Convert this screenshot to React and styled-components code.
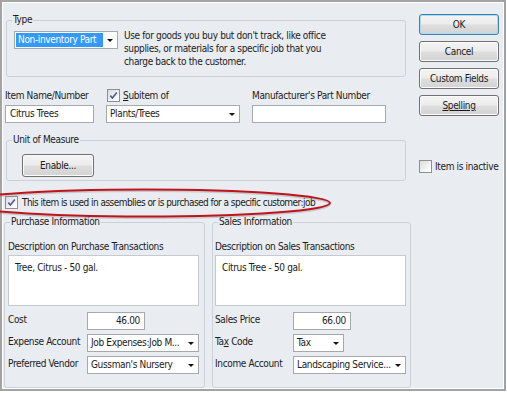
import React from 'react'
import styled, { createGlobalStyle } from 'styled-components'

const GlobalStyle = createGlobalStyle`
  body {
    margin: 0;
    background: #fff;
    font-family: "DejaVu Sans Condensed", "DejaVu Sans", sans-serif;
    font-stretch: condensed;
    font-size: 10px;
    letter-spacing: -0.35px;
    color: #1b1b1b;
  }
`

const Frame = styled.div`
  position: relative;
  width: 506px;
  height: 391px;
  box-sizing: border-box;
  border: 2px solid #a3a3a3;
  box-shadow: inset 0 0 0 1px #fff;
  background: #e9ecf0;
  padding: 11px 0 0 4px;
`

const TopArea = styled.div`
  display: flex;
  gap: 13px;
`

const LeftCol = styled.div`
  width: 400px;
`

const RightCol = styled.div`
  width: 80px;
  display: flex;
  flex-direction: column;
  gap: 6px;
  margin-top: 1px;
`

const Group = styled.fieldset`
  margin: ${p => p.$mt || 0}px 0 0 0;
  padding: 0;
  min-width: 0;
  box-sizing: border-box;
  height: ${p => p.$h}px;
  border: 1px solid #cbd1d8;
  border-radius: 3px;
`

const Legend = styled.legend`
  margin-left: 5px;
  padding: 0 1px;
  line-height: 14px;
`

const GroupBody = styled.div`
  padding: ${p => p.$pad};
`

const TypeRow = styled.div`
  display: flex;
  align-items: flex-start;
  gap: 6px;
`

const TypeDesc = styled.div`
  margin-top: -2px;
  line-height: 13px;
  white-space: nowrap;
`

const Select = styled.div`
  width: ${p => p.$w}px;
  height: 18px;
  box-sizing: border-box;
  border: 1px solid #a5a9ae;
  background: #fff;
  display: flex;
  align-items: stretch;
`

const SelectText = styled.span`
  flex: 1;
  margin: 1px 0 1px 1px;
  padding-left: 2px;
  line-height: 14px;
  white-space: nowrap;
  overflow: hidden;
  background: ${p => (p.$selected ? '#3399ff' : 'transparent')};
  color: ${p => (p.$selected ? '#fff' : '#1b1b1b')};
`

const SelectArrow = styled.span`
  width: 14px;
  display: flex;
  align-items: center;
  justify-content: center;
  &::after {
    content: '';
    border-left: 3px solid transparent;
    border-right: 3px solid transparent;
    border-top: 3px solid #111;
  }
`

const TextInput = styled.div`
  width: ${p => p.$w}px;
  height: 18px;
  box-sizing: border-box;
  border: 1px solid #a5a9ae;
  background: #fff;
  padding: 0 4px;
  line-height: 16px;
  text-align: ${p => p.$align || 'left'};
  white-space: nowrap;
`

const ItemRow = styled.div`
  display: flex;
  gap: 12px;
  margin: 9px 0 0 -1px;
`

const Field = styled.div`
  width: ${p => p.$w}px;
`

const FieldLabel = styled.div`
  height: 19px;
  display: flex;
  align-items: center;
  gap: 3px;
  white-space: nowrap;
  padding-left: ${p => p.$indent || 0}px;
`

const Box = styled.span`
  width: 13px;
  height: 13px;
  box-sizing: border-box;
  border: 1px solid #8e8f91;
  background: linear-gradient(135deg, #d9dadc 0%, #f7f7f7 70%, #fff 100%);
  display: inline-flex;
  align-items: center;
  justify-content: center;
  flex-shrink: 0;
`

const Button = styled.button`
  width: ${p => p.$w}px;
  height: ${p => p.$h}px;
  padding: 0;
  border: 1px solid ${p => (p.$default ? '#3c7fb1' : '#707070')};
  border-radius: 3px;
  background: linear-gradient(#f4f4f4 0%, #ececec 48%, #dedede 52%, #d3d3d3 100%);
  box-shadow: inset 0 0 0 1px ${p => (p.$default ? '#a9dcf5' : '#fbfbfb')};
  font-family: inherit;
  font-size: 10px;
  letter-spacing: inherit;
  color: #1b1b1b;
`

const InactiveRow = styled.div`
  margin-top: 38px;
  display: flex;
  align-items: center;
  gap: 3px;
  white-space: nowrap;
`

const AssemblyRow = styled.div`
  margin: 15px 0 0 -1px;
  display: flex;
  align-items: center;
  gap: 4px;
  height: 13px;
  letter-spacing: -0.55px;
  white-space: nowrap;
`

const Panels = styled.div`
  display: grid;
  grid-template-columns: 201px 199px;
  column-gap: 7px;
  margin: 6px 0 0 -2px;
`

const PanelLabel = styled.div`
  line-height: 14px;
  margin: 1px 0;
`

const TextArea = styled.div`
  width: 191px;
  height: 51px;
  box-sizing: border-box;
  border: 1px solid #c5cad0;
  background: #fff;
  padding: 5px 6px;
  line-height: 14px;
`

const FormGrid = styled.div`
  display: grid;
  grid-template-columns: ${p => p.$labelW}px auto;
  row-gap: 4px;
  align-items: center;
  margin-top: 6px;
`

const FormLabel = styled.span`
  line-height: 14px;
  margin-top: -3px;
  white-space: nowrap;
`

const Ellipse = styled.svg`
  position: absolute;
  left: 0;
  top: 180px;
  overflow: visible;
  pointer-events: none;
`

const Check = () => (
  <svg width="9" height="9" viewBox="0 0 9 9">
    <path d="M1.3 4.6 L3.4 7 L7.8 1.4" fill="none" stroke="#4b5d96" strokeWidth="1.6" />
  </svg>
)

const CheckBox = ({ checked }) => <Box>{checked && <Check />}</Box>

const Dropdown = ({ w, children, selected }) => (
  <Select $w={w}>
    <SelectText $selected={selected}>{children}</SelectText>
    <SelectArrow />
  </Select>
)

export default function App() {
  return (
    <>
      <GlobalStyle />
      <Frame>
        <TopArea>
          <LeftCol>
            <Group $h={64}>
              <Legend>Type</Legend>
              <GroupBody $pad="4px 0 0 7px">
                <TypeRow>
                  <Dropdown w={104} selected>Non-inventory Part</Dropdown>
                  <TypeDesc>
                    Use for goods you buy but don't track, like office<br />
                    supplies, or materials for a specific job that you<br />
                    charge back to the customer.
                  </TypeDesc>
                </TypeRow>
              </GroupBody>
            </Group>

            <ItemRow>
              <Field $w={89}>
                <FieldLabel>Item Name/Number</FieldLabel>
                <TextInput $w={89}>Citrus Trees</TextInput>
              </Field>
              <Field $w={134}>
                <FieldLabel $indent={1}>
                  <CheckBox checked />
                  <span><u>S</u>ubitem of</span>
                </FieldLabel>
                <Dropdown w={134}>Plants/Trees</Dropdown>
              </Field>
              <Field $w={134}>
                <FieldLabel>Manufacturer's Part Number</FieldLabel>
                <TextInput $w={134}></TextInput>
              </Field>
            </ItemRow>

            <Group $h={48} $mt={10}>
              <Legend>Unit of Measure</Legend>
              <GroupBody $pad="7px 0 0 15px">
                <Button $w={72} $h={23}>Enable...</Button>
              </GroupBody>
            </Group>
          </LeftCol>

          <RightCol>
            <Button $w={80} $h={21} $default>OK</Button>
            <Button $w={80} $h={21}>Cancel</Button>
            <Button $w={80} $h={21}>Custom Fields</Button>
            <Button $w={80} $h={21}><u>Spelling</u></Button>
            <InactiveRow>
              <CheckBox />
              <span>Item is inactive</span>
            </InactiveRow>
          </RightCol>
        </TopArea>

        <AssemblyRow>
          <CheckBox checked />
          <span>This item is used in assemblies or is purchased for a specific customer:job</span>
        </AssemblyRow>

        <Panels>
          <Group $h={173}>
            <Legend>Purchase Information</Legend>
            <GroupBody $pad="10px 0 0 3px">
              <PanelLabel>Description on Purchase Transactions</PanelLabel>
              <TextArea>Tree, Citrus - 50 gal.</TextArea>
              <FormGrid $labelW={79}>
                <FormLabel>Cost</FormLabel>
                <TextInput $w={58} $align="right">46.00</TextInput>
                <FormLabel>Expense Account</FormLabel>
                <Dropdown w={112}>Job Expenses:Job M...</Dropdown>
                <FormLabel>Preferred Vendor</FormLabel>
                <Dropdown w={112}>Gussman's Nursery</Dropdown>
              </FormGrid>
            </GroupBody>
          </Group>

          <Group $h={173}>
            <Legend>Sales Information</Legend>
            <GroupBody $pad="10px 0 0 2px">
              <PanelLabel>Description on Sales Transactions</PanelLabel>
              <TextArea>Citrus Tree - 50 gal.</TextArea>
              <FormGrid $labelW={78}>
                <FormLabel>Sales Price</FormLabel>
                <TextInput $w={58} $align="right">66.00</TextInput>
                <FormLabel>Ta<u>x</u> Code</FormLabel>
                <Dropdown w={51}>Tax</Dropdown>
                <FormLabel>Income Account</FormLabel>
                <Dropdown w={113}>Landscaping Service...</Dropdown>
              </FormGrid>
            </GroupBody>
          </Group>
        </Panels>

        <Ellipse width="340" height="40" viewBox="0 180 340 40">
          <ellipse cx="143" cy="202.5" rx="185" ry="13.5" fill="none" stroke="#8a8a8a" strokeOpacity="0.35" strokeWidth="2" />
          <ellipse cx="143" cy="201" rx="185" ry="13.5" fill="none" stroke="#c0141c" strokeWidth="2" />
        </Ellipse>
      </Frame>
    </>
  )
}
